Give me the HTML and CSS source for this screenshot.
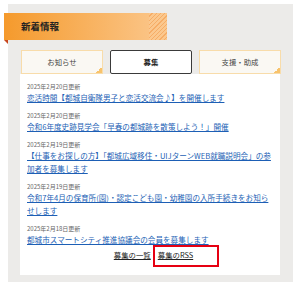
FILE: index.html
```html
<!DOCTYPE html>
<html lang="ja">

<head>
  <meta charset="UTF-8" />
  <meta name="viewport" content="width=device-width, initial-scale=1.0" />
  <title>新着情報</title>
  <link rel="stylesheet" href="styles.css">
</head>

<body>
  <div class="news">
    <h2 class="news-title">新着情報</h2>

    <div class="tabs">
      <div class="tab">お知らせ</div>
      <div class="tab active">募集</div>
      <div class="tab">支援・助成</div>
    </div>

    <div class="panel">
      <ul class="list">
        <li>
          <p class="date">2025年2月20日更新</p>
          <a href="#">恋活時間【都城自衛隊男子と恋活交流会♪】を開催します</a>
        </li>
        <li>
          <p class="date">2025年2月20日更新</p>
          <a href="#">令和6年度史跡見学会「早春の都城跡を散策しよう！」開催</a>
        </li>
        <li>
          <p class="date">2025年2月19日更新</p>
          <a href="#">【仕事をお探しの方】「都城広域移住・UIJターンWEB就職説明会」の参加者を募集します</a>
        </li>
        <li>
          <p class="date">2025年2月19日更新</p>
          <a href="#">令和7年4月の保育所(園)・認定こども園・幼稚園の入所手続きをお知らせします</a>
        </li>
        <li>
          <p class="date">2025年2月18日更新</p>
          <a href="#">都城市スマートシティ推進協議会の会員を募集します</a>
        </li>
      </ul>

      <div class="more">
        <a href="#">募集の一覧</a>
        <a href="#" class="rss">募集のRSS</a>
      </div>
    </div>
  </div>
</body>

</html>
```

FILE: styles.css
```css
body {
  font-family: "Noto Sans CJK JP", "Noto Sans", sans-serif;
  background: #fff;
  color: #333;
  margin: 0;
  padding: 0;
}

.news {
  width: 260px;
  margin: 4px 0 0 8px;
  padding: 9px 13px 9px 12px;
  background: #ecebe9;
}

.news-title {
  position: relative;
  width: 146px;
  height: 27px;
  margin: 0 0 10px -16px;
  padding: 0 0 0 17px;
  font-size: 9.5px;
  line-height: 27px;
  font-weight: bold;
  color: #222;
  background: linear-gradient(to right, #f59a2c, #fbc88e);
}

.news-title::before {
  content: "";
  position: absolute;
  left: 0;
  bottom: -4px;
  border-top: 4px solid #c8471e;
  border-left: 4px solid transparent;
}

.news-title::after {
  content: "";
  position: absolute;
  right: 0;
  top: 0;
  width: 18px;
  height: 27px;
  background: repeating-linear-gradient(135deg, #fbc88e 0 2px, #f6ad66 2px 3px);
}

.tabs {
  display: flex;
  gap: 7px;
  margin-left: 1px;
  width: 260px;
}

.tab {
  position: relative;
  flex: 1;
  height: 22px;
  line-height: 22px;
  text-align: center;
  font-size: 7.4px;
  color: #444;
  background: #faf8f3;
  border: 1px solid #f8dcaa;
}

.tab::after {
  content: "";
  position: absolute;
  right: 0;
  bottom: 0;
  width: 6px;
  height: 6px;
  background: linear-gradient(135deg, transparent 50%, #f8c36c 50%);
}

.tab.active {
  background: #fff;
  border: 1px solid #3a3a3a;
  border-radius: 2px;
  font-weight: bold;
  color: #222;
}

.tab.active::after {
  display: none;
}

.panel {
  width: 245px;
  padding: 8px 8px 3px 7px;
  background: #fff;
}

.list {
  list-style: none;
  margin: 0;
  padding: 0;
}

.list li {
  margin-bottom: 7px;
  font-size: 7.6px;
  line-height: 13px;
}

.list li:last-child {
  margin-bottom: 0;
}

.date {
  margin: 0;
  font-size: 6px;
  line-height: 9px;
  color: #666;
}

.list a {
  color: #1d5fb5;
  text-decoration: underline;
}

.more {
  display: flex;
  justify-content: center;
  gap: 7px;
  margin-top: 2px;
  height: 24px;
  padding-left: 8px;
  font-size: 7.4px;
  line-height: 13px;
}

.more a {
  color: #222;
  text-decoration: underline;
}

.rss {
  position: relative;
}

.rss::after {
  content: "";
  position: absolute;
  left: -5px;
  top: -3px;
  width: 62px;
  height: 18px;
  border: 2px solid #e60012;
}
```
